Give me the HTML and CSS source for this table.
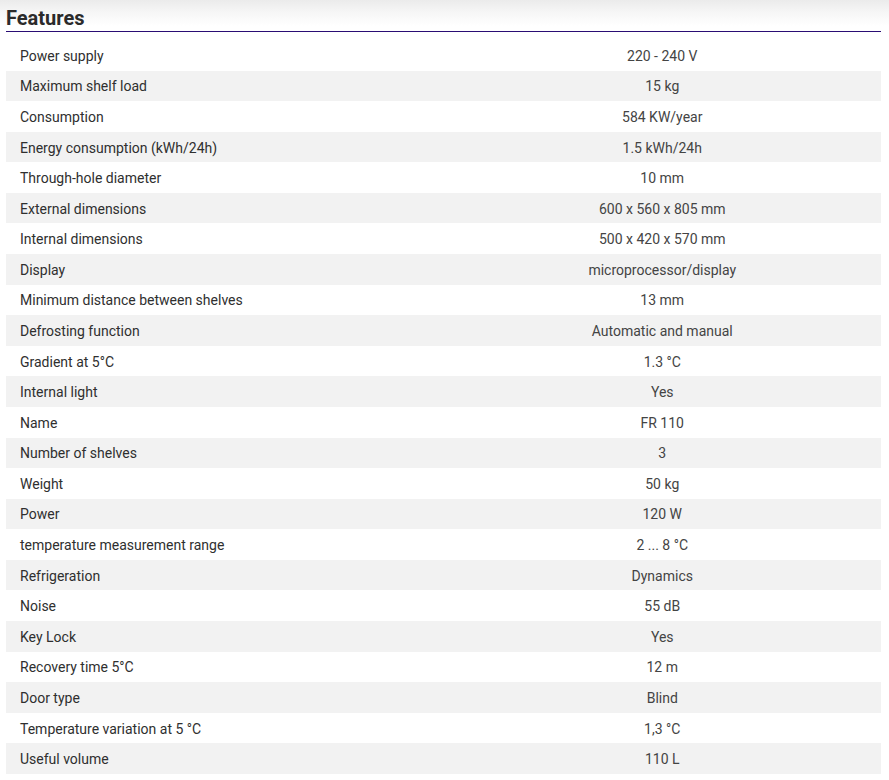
FILE: index.html
```html
<!DOCTYPE html>
<html lang="en">
<head>
<meta charset="utf-8">
<title>Features</title>
<link rel="stylesheet" href="styles.css">
</head>
<body>
<section class="features">
  <h2 class="features-title">Features</h2>
  <table class="spec-table">
    <tbody>
      <tr><td>Power supply</td><td>220 - 240 V</td></tr>
      <tr><td>Maximum shelf load</td><td>15 kg</td></tr>
      <tr><td>Consumption</td><td>584 KW/year</td></tr>
      <tr><td>Energy consumption (kWh/24h)</td><td>1.5 kWh/24h</td></tr>
      <tr><td>Through-hole diameter</td><td>10 mm</td></tr>
      <tr><td>External dimensions</td><td>600 x 560 x 805 mm</td></tr>
      <tr><td>Internal dimensions</td><td>500 x 420 x 570 mm</td></tr>
      <tr><td>Display</td><td>microprocessor/display</td></tr>
      <tr><td>Minimum distance between shelves</td><td>13 mm</td></tr>
      <tr><td>Defrosting function</td><td>Automatic and manual</td></tr>
      <tr><td>Gradient at 5°C</td><td>1.3 °C</td></tr>
      <tr><td>Internal light</td><td>Yes</td></tr>
      <tr><td>Name</td><td>FR 110</td></tr>
      <tr><td>Number of shelves</td><td>3</td></tr>
      <tr><td>Weight</td><td>50 kg</td></tr>
      <tr><td>Power</td><td>120 W</td></tr>
      <tr><td>temperature measurement range</td><td>2 ... 8 °C</td></tr>
      <tr><td>Refrigeration</td><td>Dynamics</td></tr>
      <tr><td>Noise</td><td>55 dB</td></tr>
      <tr><td>Key Lock</td><td>Yes</td></tr>
      <tr><td>Recovery time 5°C</td><td>12 m</td></tr>
      <tr><td>Door type</td><td>Blind</td></tr>
      <tr><td>Temperature variation at 5 °C</td><td>1,3 °C</td></tr>
      <tr><td>Useful volume</td><td>110 L</td></tr>
    </tbody>
  </table>
</section>
</body>
</html>
```

FILE: styles.css
```css
html, body {
  margin: 0;
  padding: 0;
}

body {
  background: #fff linear-gradient(to bottom, #ebebeb 0, #f6f6f6 12px, #fff 26px) no-repeat;
  background-size: 100% 30px;
  font-family: Roboto, "Liberation Sans", Arial, sans-serif;
  color: #333;
}

.features {
  margin: 0 8px 0 6px;
}

.features-title {
  margin: 0;
  height: 32px;
  box-sizing: border-box;
  padding-top: 6px;
  font-size: 20px;
  line-height: 24px;
  font-weight: 700;
  color: #2b2b2b;
  border-bottom: 1px solid #2a0d74;
}

.spec-table {
  width: 100%;
  margin-top: 8px;
  border-collapse: collapse;
  table-layout: fixed;
  font-size: 14px;
}

.spec-table td {
  height: 30.58px;
  padding: 1px 14px 0;
  vertical-align: middle;
  line-height: 18px;
  box-sizing: border-box;
}

.spec-table td:first-child {
  color: #2f2f2f;
}

.spec-table td:last-child {
  text-align: center;
  color: #444;
}

.spec-table tr:nth-child(even) {
  background: #f2f2f2;
}
```
